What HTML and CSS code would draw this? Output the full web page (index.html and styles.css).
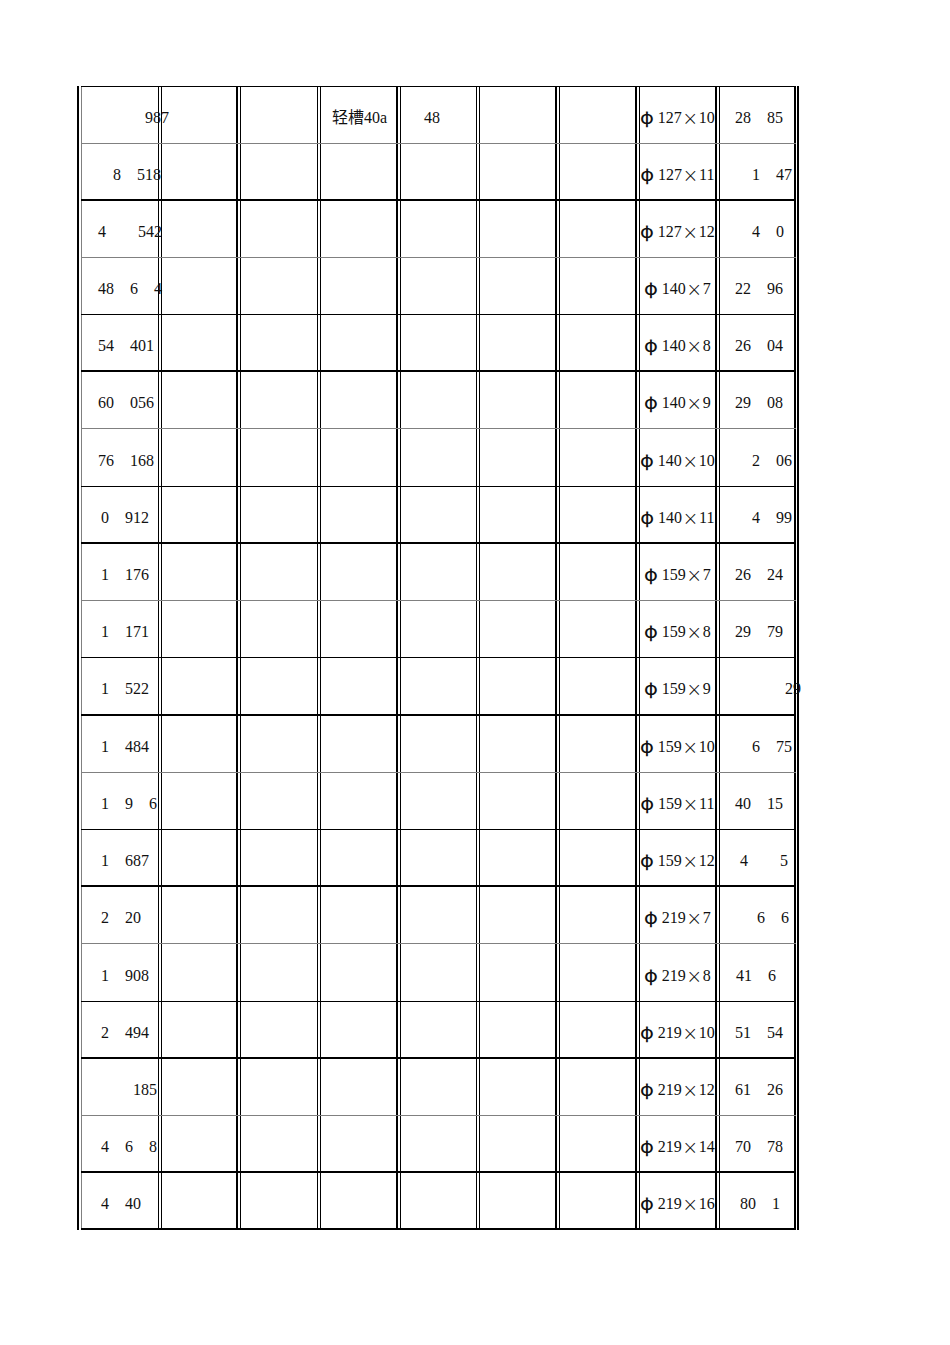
FILE: index.html
```html
<!DOCTYPE html>
<html lang="zh">
<head>
<meta charset="utf-8">
<title>Sheet</title>
<link rel="stylesheet" href="styles.css">
</head>
<body>
<div class="sheet">
  <div class="row first g1">
    <div class="cell"><span class="p63">987</span></div><div class="cell"></div><div class="cell"></div>
    <div class="cell"><span class="p11">轻槽40a</span></div><div class="cell"><span class="p23">48</span></div>
    <div class="cell"></div><div class="cell"></div>
    <div class="cell spec"><span class="phi">φ</span> 127<span class="x">×</span>10</div>
    <div class="cell"><span class="p15">28&ensp;&ensp;85</span></div>
  </div>
  <div class="row k2">
    <div class="cell"><span class="p31">8&ensp;&ensp;518</span></div><div class="cell"></div><div class="cell"></div><div class="cell"></div><div class="cell"></div><div class="cell"></div><div class="cell"></div>
    <div class="cell spec"><span class="phi">φ</span> 127<span class="x">×</span>11</div>
    <div class="cell"><span class="p32">1&ensp;&ensp;47</span></div>
  </div>
  <div class="row g1">
    <div class="cell"><span class="p16">4&ensp;&ensp;&ensp;&ensp;542</span></div><div class="cell"></div><div class="cell"></div><div class="cell"></div><div class="cell"></div><div class="cell"></div><div class="cell"></div>
    <div class="cell spec"><span class="phi">φ</span> 127<span class="x">×</span>12</div>
    <div class="cell"><span class="p32">4&ensp;&ensp;0</span></div>
  </div>
  <div class="row k1">
    <div class="cell"><span class="p16">48&ensp;&ensp;6&ensp;&ensp;4</span></div><div class="cell"></div><div class="cell"></div><div class="cell"></div><div class="cell"></div><div class="cell"></div><div class="cell"></div>
    <div class="cell spec"><span class="phi">φ</span> 140<span class="x">×</span>7</div>
    <div class="cell"><span class="p15">22&ensp;&ensp;96</span></div>
  </div>
  <div class="row k2">
    <div class="cell"><span class="p16">54&ensp;&ensp;401</span></div><div class="cell"></div><div class="cell"></div><div class="cell"></div><div class="cell"></div><div class="cell"></div><div class="cell"></div>
    <div class="cell spec"><span class="phi">φ</span> 140<span class="x">×</span>8</div>
    <div class="cell"><span class="p15">26&ensp;&ensp;04</span></div>
  </div>
  <div class="row g1">
    <div class="cell"><span class="p16">60&ensp;&ensp;056</span></div><div class="cell"></div><div class="cell"></div><div class="cell"></div><div class="cell"></div><div class="cell"></div><div class="cell"></div>
    <div class="cell spec"><span class="phi">φ</span> 140<span class="x">×</span>9</div>
    <div class="cell"><span class="p15">29&ensp;&ensp;08</span></div>
  </div>
  <div class="row k1 tall">
    <div class="cell"><span class="p16">76&ensp;&ensp;168</span></div><div class="cell"></div><div class="cell"></div><div class="cell"></div><div class="cell"></div><div class="cell"></div><div class="cell"></div>
    <div class="cell spec"><span class="phi">φ</span> 140<span class="x">×</span>10</div>
    <div class="cell"><span class="p32">2&ensp;&ensp;06</span></div>
  </div>
  <div class="row k2">
    <div class="cell"><span class="p19">0&ensp;&ensp;912</span></div><div class="cell"></div><div class="cell"></div><div class="cell"></div><div class="cell"></div><div class="cell"></div><div class="cell"></div>
    <div class="cell spec"><span class="phi">φ</span> 140<span class="x">×</span>11</div>
    <div class="cell"><span class="p32">4&ensp;&ensp;99</span></div>
  </div>
  <div class="row g1">
    <div class="cell"><span class="p19">1&ensp;&ensp;176</span></div><div class="cell"></div><div class="cell"></div><div class="cell"></div><div class="cell"></div><div class="cell"></div><div class="cell"></div>
    <div class="cell spec"><span class="phi">φ</span> 159<span class="x">×</span>7</div>
    <div class="cell"><span class="p15">26&ensp;&ensp;24</span></div>
  </div>
  <div class="row k1">
    <div class="cell"><span class="p19">1&ensp;&ensp;171</span></div><div class="cell"></div><div class="cell"></div><div class="cell"></div><div class="cell"></div><div class="cell"></div><div class="cell"></div>
    <div class="cell spec"><span class="phi">φ</span> 159<span class="x">×</span>8</div>
    <div class="cell"><span class="p15">29&ensp;&ensp;79</span></div>
  </div>
  <div class="row k2 tall">
    <div class="cell"><span class="p19">1&ensp;&ensp;522</span></div><div class="cell"></div><div class="cell"></div><div class="cell"></div><div class="cell"></div><div class="cell"></div><div class="cell"></div>
    <div class="cell spec"><span class="phi">φ</span> 159<span class="x">×</span>9</div>
    <div class="cell"><span class="p65">29</span></div>
  </div>
  <div class="row g1">
    <div class="cell"><span class="p19">1&ensp;&ensp;484</span></div><div class="cell"></div><div class="cell"></div><div class="cell"></div><div class="cell"></div><div class="cell"></div><div class="cell"></div>
    <div class="cell spec"><span class="phi">φ</span> 159<span class="x">×</span>10</div>
    <div class="cell"><span class="p32">6&ensp;&ensp;75</span></div>
  </div>
  <div class="row k1">
    <div class="cell"><span class="p19">1&ensp;&ensp;9&ensp;&ensp;6</span></div><div class="cell"></div><div class="cell"></div><div class="cell"></div><div class="cell"></div><div class="cell"></div><div class="cell"></div>
    <div class="cell spec"><span class="phi">φ</span> 159<span class="x">×</span>11</div>
    <div class="cell"><span class="p15">40&ensp;&ensp;15</span></div>
  </div>
  <div class="row k2">
    <div class="cell"><span class="p19">1&ensp;&ensp;687</span></div><div class="cell"></div><div class="cell"></div><div class="cell"></div><div class="cell"></div><div class="cell"></div><div class="cell"></div>
    <div class="cell spec"><span class="phi">φ</span> 159<span class="x">×</span>12</div>
    <div class="cell"><span class="p20">4&ensp;&ensp;&ensp;&ensp;5</span></div>
  </div>
  <div class="row g1">
    <div class="cell"><span class="p19">2&ensp;&ensp;20</span></div><div class="cell"></div><div class="cell"></div><div class="cell"></div><div class="cell"></div><div class="cell"></div><div class="cell"></div>
    <div class="cell spec"><span class="phi">φ</span> 219<span class="x">×</span>7</div>
    <div class="cell"><span class="p37">6&ensp;&ensp;6</span></div>
  </div>
  <div class="row k1 tall">
    <div class="cell"><span class="p19">1&ensp;&ensp;908</span></div><div class="cell"></div><div class="cell"></div><div class="cell"></div><div class="cell"></div><div class="cell"></div><div class="cell"></div>
    <div class="cell spec"><span class="phi">φ</span> 219<span class="x">×</span>8</div>
    <div class="cell"><span class="p16">41&ensp;&ensp;6</span></div>
  </div>
  <div class="row k2">
    <div class="cell"><span class="p19">2&ensp;&ensp;494</span></div><div class="cell"></div><div class="cell"></div><div class="cell"></div><div class="cell"></div><div class="cell"></div><div class="cell"></div>
    <div class="cell spec"><span class="phi">φ</span> 219<span class="x">×</span>10</div>
    <div class="cell"><span class="p15">51&ensp;&ensp;54</span></div>
  </div>
  <div class="row g1">
    <div class="cell"><span class="p51">185</span></div><div class="cell"></div><div class="cell"></div><div class="cell"></div><div class="cell"></div><div class="cell"></div><div class="cell"></div>
    <div class="cell spec"><span class="phi">φ</span> 219<span class="x">×</span>12</div>
    <div class="cell"><span class="p15">61&ensp;&ensp;26</span></div>
  </div>
  <div class="row k2">
    <div class="cell"><span class="p19">4&ensp;&ensp;6&ensp;&ensp;8</span></div><div class="cell"></div><div class="cell"></div><div class="cell"></div><div class="cell"></div><div class="cell"></div><div class="cell"></div>
    <div class="cell spec"><span class="phi">φ</span> 219<span class="x">×</span>14</div>
    <div class="cell"><span class="p15">70&ensp;&ensp;78</span></div>
  </div>
  <div class="row k2">
    <div class="cell"><span class="p19">4&ensp;&ensp;40</span></div><div class="cell"></div><div class="cell"></div><div class="cell"></div><div class="cell"></div><div class="cell"></div><div class="cell"></div>
    <div class="cell spec"><span class="phi">φ</span> 219<span class="x">×</span>16</div>
    <div class="cell"><span class="p20">80&ensp;&ensp;1</span></div>
  </div>
</div>
</body>
</html>
```
FILE: styles.css
```css
html, body {
  margin: 0;
  padding: 0;
  background: #fff;
}

body {
  padding-top: 86px;
  min-height: 1345px;
  box-sizing: border-box;
  font-family: "Liberation Serif", "Noto Sans CJK SC", serif;
  font-size: 16px;
  color: #000;
}

.sheet {
  margin: 0 0 0 77px;
  padding: 0 1px 0 2px;
  width: fit-content;
  border-left: 2px solid #000;
  border-right: 2px solid #000;
}

.row {
  display: flex;
  gap: 2px;
  height: 57px;
  box-sizing: border-box;
}

.row.tall { height: 58px; }
.row.first { height: 58px; border-top: 1px solid #000; }

.g1 { border-bottom: 1px solid #808080; }
.k1 { border-bottom: 1px solid #000; }
.k2 { border-bottom: 2px solid #000; }

.cell {
  box-sizing: border-box;
  width: 78px;
  display: flex;
  align-items: center;
  padding-top: 6px;
  border-left: 1px solid #000;
  border-right: 1px solid #000;
  white-space: pre;
  line-height: 18px;
  color: #111;
}

.cell:nth-child(1) { border-left-color: #808080; }
.cell:nth-child(2),
.cell:nth-child(5),
.cell:nth-child(9) { width: 77px; }
.cell:nth-child(2),
.cell:nth-child(4),
.cell:nth-child(6),
.cell:nth-child(7),
.cell:nth-child(8),
.cell:nth-child(9) { border-right-width: 2px; }

.spec {
  justify-content: center;
}

.phi {
  font-family: "Noto Sans CJK SC", sans-serif;
  font-weight: 500;
  font-size: 17px;
  position: relative;
  top: -1px;
}

.x {
  display: inline-block;
  width: 17px;
  text-align: center;
  font-family: "DejaVu Sans", sans-serif;
  font-weight: 200;
  font-size: 19px;
  line-height: 16px;
}

.p11 { padding-left: 11px; }
.p15 { padding-left: 15px; }
.p16 { padding-left: 16px; }
.p19 { padding-left: 19px; }
.p20 { padding-left: 20px; }
.p23 { padding-left: 23px; }
.p31 { padding-left: 31px; }
.p32 { padding-left: 32px; }
.p37 { padding-left: 37px; }
.p51 { padding-left: 51px; }
.p63 { padding-left: 63px; }
.p65 { padding-left: 65px; }
```
